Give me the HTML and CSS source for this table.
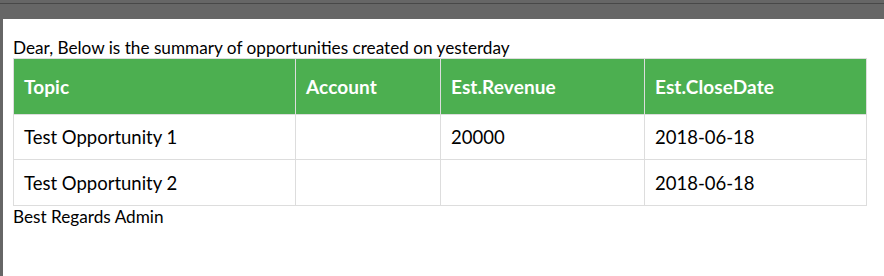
FILE: index.html
```html
<!DOCTYPE html>
<html>
<head>
<meta charset="utf-8">
<link rel="stylesheet" href="styles.css">
</head>
<body>
<div class="chrome"><div class="chrome-line"></div></div>
<div class="page">
  <p class="intro">Dear, Below is the summary of opportunities created on yesterday</p>
  <table class="grid">
    <colgroup>
      <col class="c1"><col class="c2"><col class="c3"><col class="c4">
    </colgroup>
    <thead>
      <tr><th>Topic</th><th>Account</th><th>Est.Revenue</th><th>Est.CloseDate</th></tr>
    </thead>
    <tbody>
      <tr><td>Test Opportunity 1</td><td></td><td>20000</td><td>2018-06-18</td></tr>
      <tr class="last"><td>Test Opportunity 2</td><td></td><td></td><td>2018-06-18</td></tr>
    </tbody>
  </table>
  <p class="sign">Best Regards Admin</p>
</div>
</body>
</html>
```

FILE: styles.css
```css
html, body {
  margin: 0;
  padding: 0;
  background: #ffffff;
  height: 100%;
}
body {
  font-family: Lato, "Open Sans", sans-serif;
  color: #000;
  overflow: hidden;
}
.chrome {
  height: 19px;
  background: #666666;
  padding-top: 3px;
  box-sizing: border-box;
}
.chrome-line {
  height: 1px;
  background: #484848;
}
.page {
  border-left: 3px solid #666666;
  height: 257px;
  box-sizing: border-box;
  padding: 19px 0 0 10px;
}
.intro, .sign {
  margin: 0;
  font-size: 17.2px;
  line-height: 20px;
}
.sign {
  line-height: 22px;
}
.grid {
  border-collapse: collapse;
  table-layout: fixed;
  width: 854px;
}
.c1 { width: 282px; }
.c2 { width: 145px; }
.c3 { width: 204px; }
.c4 { width: 222px; }
.grid th, .grid td {
  border: 1px solid #dddddd;
  text-align: left;
  padding: 0 0 0 10px;
}
.grid th {
  background: #4caf50;
  color: #ffffff;
  font-weight: 700;
  font-size: 19px;
  letter-spacing: 0.1px;
  height: 55px;
}
.grid td {
  font-size: 18.5px;
  height: 44px;
}
.grid .last td {
  height: 45px;
}
```
